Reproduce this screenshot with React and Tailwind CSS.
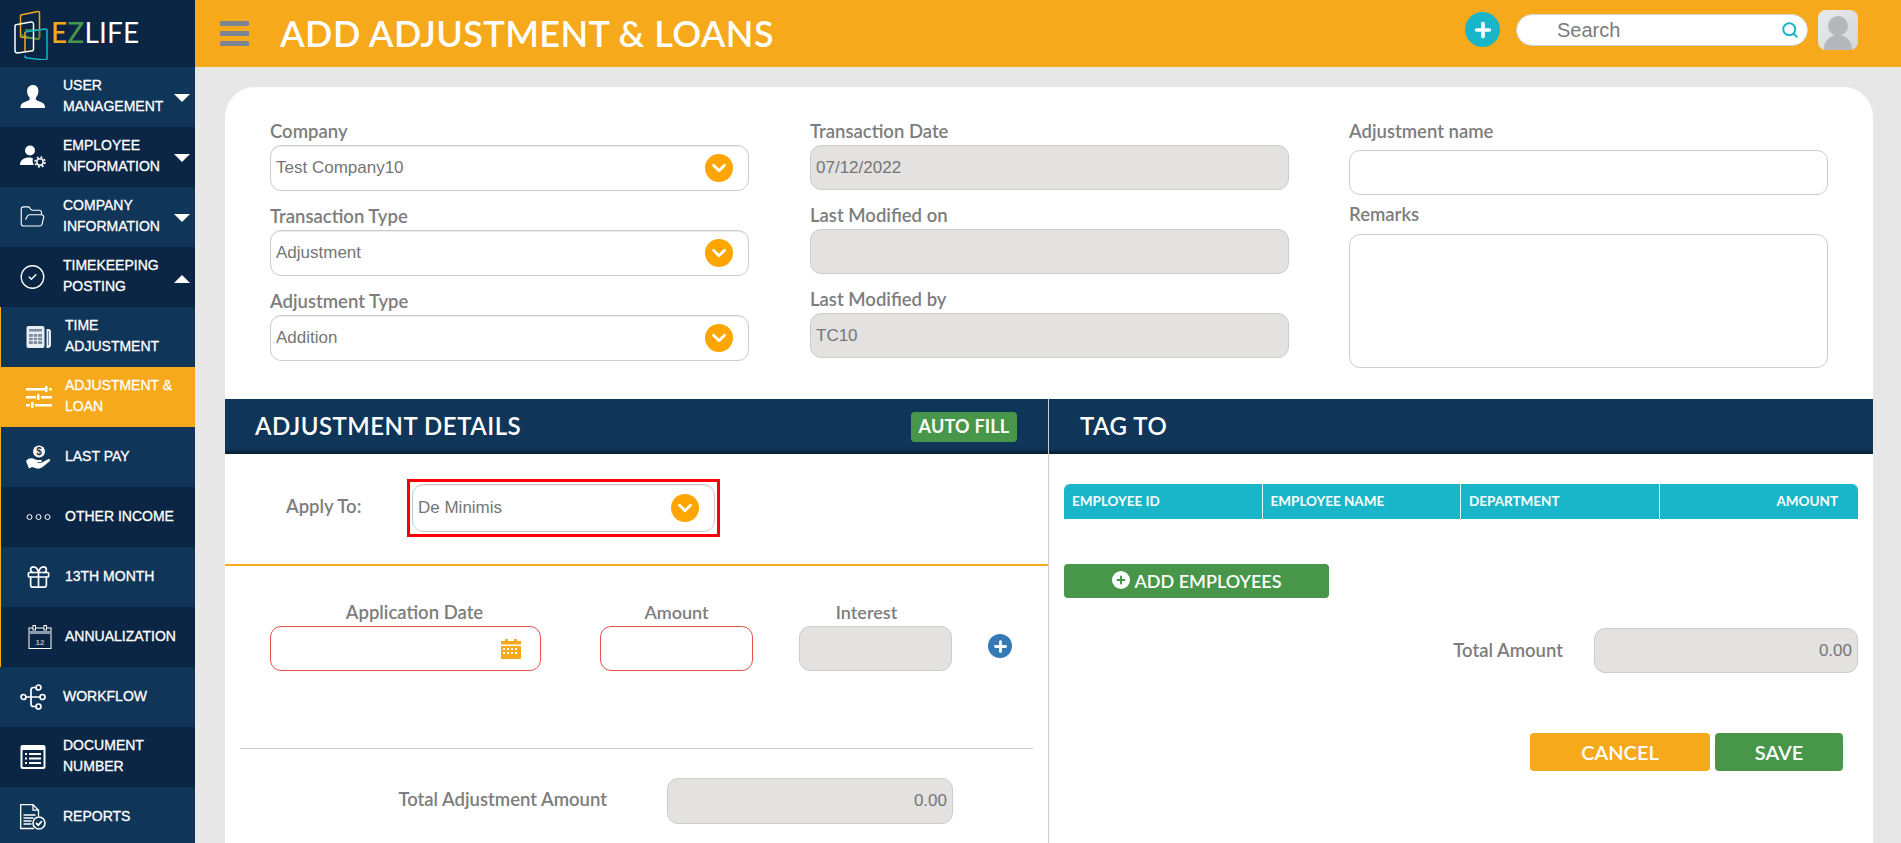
import React from "react";
import { ChevronDown, CircleCheck, FolderOpen, Gift, Plus, Search } from "lucide-react";

const heading = "font-['Lato',sans-serif]";
const arial = "font-['Liberation_Sans',Arial,sans-serif]";

function UserIcon() {
  return (
    <svg width="26" height="24" viewBox="0 0 26 24" fill="#fff">
      <path d="M13 0c3.4 0 5.4 2.6 5.4 6 0 2.6-1 5-2.5 6.400v2.300c1 .9 4.500 1.800 7 3.300 1.600 1 2.100 2.800 2.100 5H.5c0-2.200.5-4 2.100-5 2.500-1.500 6-2.400 7-3.300v-2.300C8.100 11 7.100 8.600 7.100 6 7.100 2.600 9.600 0 13 0z" />
    </svg>
  );
}

function EmployeeIcon() {
  return (
    <svg width="26" height="24" viewBox="0 0 26 24" fill="none">
      <circle cx="10" cy="5.500" r="5" fill="#fff" />
      <path d="M0 20c0-5 4-7.500 9-7.500 1.500 0 3 .2 4 .7-.8 2.500-.3 5 1 6.800z" fill="#fff" />
      <circle cx="20" cy="17" r="3.200" stroke="#fff" strokeWidth="1.500" />
      <circle cx="20" cy="17" r="5" stroke="#fff" strokeWidth="1.500" strokeDasharray="2 1.900" />
    </svg>
  );
}

function NewsIcon() {
  return (
    <svg width="26" height="24" viewBox="0 0 26 24" fill="none">
      <rect x="0.500" y="1" width="18" height="22" rx="2" fill="#e8edf2" />
      <rect x="3" y="4" width="13" height="2.500" fill="#7d8da0" />
      <path d="M3 9h13v10H3z" fill="#7d8da0" />
      <path d="M3 12.300h13M3 15.600h13M7.300 9v10M11.600 9v10" stroke="#e8edf2" />
      <path d="M20.500 4h2c1.500 0 2.500 1 2.500 2.500V20c0 2-1.500 3-3 3h-1.500z" fill="#e8edf2" />
      <path d="M22.500 6v14" stroke="#7d8da0" />
    </svg>
  );
}

function SlidersIcon() {
  return (
    <svg width="26" height="24" viewBox="0 0 26 24" fill="#fff">
      <rect x="0" y="3" width="20" height="2.500" />
      <rect x="19" y="1" width="2.500" height="6" />
      <rect x="23" y="3" width="3" height="2.500" />
      <rect x="0" y="11" width="10" height="2.500" />
      <rect x="11" y="9" width="2.500" height="6" />
      <rect x="15" y="11" width="11" height="2.500" />
      <rect x="0" y="19" width="4" height="2.500" />
      <rect x="5" y="17" width="2.500" height="6" />
      <rect x="9" y="19" width="17" height="2.500" />
    </svg>
  );
}

function HandIcon() {
  return (
    <svg width="26" height="24" viewBox="0 0 26 24">
      <circle cx="13" cy="6.500" r="6" fill="#fff" />
      <text x="13" y="10" textAnchor="middle" fontSize="10" fontWeight="700" fill="#0f3558" fontFamily="Liberation Sans">$</text>
      <path d="M0 16c2-2.500 4.500-3 7-2.500l4 1.500h4c1.200 0 1.200 2-.2 2h-3.300v.8h4l6.500-3.500c1.600-.7 3 .8 1.600 2L16 22.500c-2 1.200-4 1.500-6 .8l-4-1.300-3 1.500z" fill="#fff" />
    </svg>
  );
}

function DotsIcon() {
  return (
    <svg width="26" height="24" viewBox="0 0 26 24" fill="none" stroke="#fff" strokeWidth="1">
      <circle cx="3.500" cy="12" r="2.500" />
      <circle cx="12.500" cy="12" r="2.500" />
      <circle cx="21.500" cy="12" r="2.500" />
    </svg>
  );
}

function CalendarTwelveIcon() {
  return (
    <svg width="26" height="26" viewBox="0 0 26 26" fill="none">
      <rect x="3" y="4" width="22" height="20.500" stroke="#fff" />
      <rect x="3.500" y="7" width="21" height="3" fill="#8e9bab" />
      <rect x="7" y="1.500" width="2.500" height="4.500" fill="#0a2644" stroke="#fff" />
      <rect x="18" y="1.500" width="2.500" height="4.500" fill="#0a2644" stroke="#fff" />
      <text x="14" y="20.500" textAnchor="middle" fontSize="8" fontWeight="700" fill="#aeb8c4" fontFamily="Liberation Sans">12</text>
    </svg>
  );
}

function WorkflowIcon() {
  return (
    <svg width="26" height="26" viewBox="0 0 26 26" fill="none" stroke="#fff" strokeWidth="1.700">
      <circle cx="3.500" cy="13" r="2.500" />
      <circle cx="18.500" cy="3.500" r="2.500" />
      <circle cx="22.500" cy="13" r="2.500" />
      <circle cx="18.500" cy="22.500" r="2.500" />
      <path d="M6 13h14M16 3.500h-2.500c-1.500 0-2.500 1-2.500 2.500v14c0 1.500 1 2.500 2.500 2.500H16" />
    </svg>
  );
}

function ListIcon() {
  return (
    <svg width="26" height="26" viewBox="0 0 26 26">
      <rect x="0.500" y="1" width="25" height="24" rx="2" fill="#fff" />
      <rect x="2.500" y="6" width="21" height="17" fill="#0a2644" />
      <g fill="#fff">
        <rect x="5" y="9" width="2" height="2" />
        <rect x="9" y="9" width="12" height="2" />
        <rect x="5" y="13.500" width="2" height="2" />
        <rect x="9" y="13.500" width="12" height="2" />
        <rect x="5" y="18" width="2" height="2" />
        <rect x="9" y="18" width="12" height="2" />
      </g>
    </svg>
  );
}

function ReportIcon() {
  return (
    <svg width="26" height="26" viewBox="0 0 26 26" fill="none" stroke="#fff" strokeWidth="1.300">
      <path d="M14 24.500H.7V.7H13l5.500 5.500v6" />
      <path d="M13 .7v5.500h5.500M3.500 11h12M3.500 14h10M3.500 17h8M3.500 20h8" />
      <circle cx="19" cy="19" r="6" fill="#0f3558" strokeWidth="1.600" />
      <path d="M16 19l2.200 2.200 3.800-4" strokeWidth="1.800" />
    </svg>
  );
}

const menu = [
  { label: ["USER", "MANAGEMENT"], icon: <UserIcon />, caret: "down", tone: "light" },
  { label: ["EMPLOYEE", "INFORMATION"], icon: <EmployeeIcon />, caret: "down", tone: "dark" },
  { label: ["COMPANY", "INFORMATION"], icon: <FolderOpen size={30} strokeWidth={1} color="#fff" />, caret: "down", tone: "light" },
  { label: ["TIMEKEEPING", "POSTING"], icon: <CircleCheck size={30} strokeWidth={1.200} color="#fff" />, caret: "up", tone: "dark" },
  { label: ["TIME", "ADJUSTMENT"], icon: <NewsIcon />, sub: true, tone: "light" },
  { label: ["ADJUSTMENT &", "LOAN"], icon: <SlidersIcon />, sub: true, tone: "active" },
  { label: ["LAST PAY"], icon: <HandIcon />, sub: true, tone: "light" },
  { label: ["OTHER INCOME"], icon: <DotsIcon />, sub: true, tone: "dark" },
  { label: ["13TH MONTH"], icon: <Gift size={30} strokeWidth={1.500} color="#fff" />, sub: true, tone: "light" },
  { label: ["ANNUALIZATION"], icon: <CalendarTwelveIcon />, sub: true, tone: "dark" },
  { label: ["WORKFLOW"], icon: <WorkflowIcon />, tone: "light" },
  { label: ["DOCUMENT", "NUMBER"], icon: <ListIcon />, tone: "dark" },
  { label: ["REPORTS"], icon: <ReportIcon />, tone: "light" },
];

const toneClass = {
  light: "bg-[#0f3558]",
  dark: "bg-[#0a2644]",
  active: "bg-[#f6a91b]",
};

function MenuItem({ item }) {
  return (
    <div
      className={`flex h-[60px] shrink-0 items-center relative ${toneClass[item.tone]} ${
        item.sub ? "border-l border-[#f6a91b] pl-[24px]" : "pl-[19px]"
      }`}
    >
      <div className="flex w-[27px] shrink-0 items-center justify-center">{item.icon}</div>
      <div className={`${arial} pb-[2px] text-white text-[14px] leading-[21px] [-webkit-text-stroke:0.3px_#fff] ${item.sub ? "ml-[13px]" : "ml-[17px]"}`}>
        {item.label.map((line) => (
          <div key={line}>{line}</div>
        ))}
      </div>
      {item.caret === "down" && (
        <div className="absolute left-[174px] top-[27px] h-0 w-0 border-x-[8px] border-t-[8px] border-x-transparent border-t-white" />
      )}
      {item.caret === "up" && (
        <div className="absolute left-[174px] top-[28px] h-0 w-0 border-x-[8px] border-b-[8px] border-x-transparent border-b-white" />
      )}
    </div>
  );
}

function Sidebar() {
  return (
    <div className="flex h-[843px] w-[195px] shrink-0 flex-col overflow-hidden bg-[#0a2644]">
      <div className="flex h-[67px] shrink-0 items-center pl-[14px]">
        <svg width="36" height="52" viewBox="0 0 36 52" fill="none" className="shrink-0">
          <path d="M6.500 7 24 3.500c.8-.1 1.500.4 1.500 1.300V30" stroke="#f6a91b" strokeWidth="1.500" />
          <path d="M6.500 7v22M6.500 29l19 2" stroke="#f6a91b" strokeWidth="1.500" />
          <path d="M7 25c0 2 1 3 3 3l12 3c2 0 3.500-1 3.500-3V22" stroke="#47964a" strokeWidth="1.500" />
          <path d="M11 22h14.500" stroke="#47964a" strokeWidth="1.500" />
          <path d="M3 16.500 17 14c1.500-.2 2.500.8 2.500 2V41c0 1.500-1 2.300-2.500 2L3.500 45c-1.500 0-2.500-1-2.500-2.500V18.500c0-1 .8-2 2-2z" stroke="#fff" strokeWidth="1.500" />
          <path d="M11 24 31 21c1.500-.2 2 .8 2 2V50c0 1.500-1 2-2.500 2L13 50c-1.500 0-2-1-2-2.500" stroke="#19b5c9" strokeWidth="1.500" />
          <path d="M11 24v19" stroke="#f6a91b" strokeWidth="1.500" />
        </svg>
        <div className={`${heading} ml-[1px] text-[28px] leading-none tracking-[0.2px] -translate-y-[2px]`}>
          <span className="font-medium text-[#f6a91b]">E</span>
          <span className="font-medium text-[#47964a]">Z</span>
          <span className="font-normal text-white">LIFE</span>
        </div>
      </div>
      {menu.map((item) => (
        <MenuItem key={item.label[0]} item={item} />
      ))}
    </div>
  );
}

function Header() {
  return (
    <div className="flex h-[67px] shrink-0 items-center bg-[#f6a91b]">
      <div className="ml-[25px] flex w-[29px] flex-col gap-[5px]">
        <div className="h-[5px] rounded-[1px] bg-[#7b8591]" />
        <div className="h-[5px] rounded-[1px] bg-[#7b8591]" />
        <div className="h-[5px] rounded-[1px] bg-[#7b8591]" />
      </div>
      <h1 className={`${heading} ml-[31px] mb-[1px] text-[36px] font-semibold leading-none tracking-[0.4px] text-white`}>
        ADD ADJUSTMENT &amp; LOANS
      </h1>
      <div className="mb-[8px] ml-auto flex items-center">
        <div className="flex h-[35px] w-[35px] items-center justify-center rounded-full bg-[#19b5c9]">
          <Plus size={22} strokeWidth={4} color="#fff" />
        </div>
        <div className="ml-[16px] flex h-[32px] w-[292px] items-center rounded-full border border-[#cfd3d6] bg-white pl-[40px] pr-[8px]">
          <span className={`${arial} text-[20px] text-[#7b7b7b]`}>Search</span>
          <Search size={18} strokeWidth={2.600} color="#19b5c9" className="ml-auto" />
        </div>
        <div className="relative ml-[10px] mr-[43px] h-[40px] w-[40px] overflow-hidden rounded-[8px] bg-gradient-to-br from-[#e9eaec] to-[#d4d6da]">
          <div className="absolute left-[10px] top-[6px] h-[20px] w-[20px] rounded-full bg-[#b5b7bc]" />
          <div className="absolute left-[6px] top-[25px] h-[28px] w-[28px] rounded-full bg-[#b5b7bc]" />
        </div>
      </div>
    </div>
  );
}

function Label({ children, className = "" }) {
  return (
    <div className={`${heading} flex h-[25px] items-center pb-[2px] text-[18.500px] font-semibold text-[#7d7d7d] ${className}`}>
      {children}
    </div>
  );
}

function Chevron() {
  return (
    <div className="flex h-[28px] w-[28px] shrink-0 items-center justify-center rounded-full bg-[#ffa500]">
      <ChevronDown size={22} strokeWidth={3} color="#fff" />
    </div>
  );
}

function SelectBox({ value, className = "" }) {
  return (
    <div className={`flex h-[46px] items-center justify-between rounded-[11px] border border-[#cccccc] bg-white pl-[5px] pr-[15px] shadow-[inset_0_1px_1px_rgba(0,0,0,0.08)] ${className}`}>
      <span className={`${arial} text-[17px] text-[#757575]`}>{value}</span>
      <Chevron />
    </div>
  );
}

function InputBox({ value, className = "", disabled, right, error }) {
  return (
    <div
      className={`flex h-[45px] items-center rounded-[11px] border ${
        error ? "border-[#e9514f] bg-white" : "border-[#cccccc]"
      } ${disabled ? "bg-[#e4e1e1]" : ""} ${right ? "justify-end pr-[5px]" : "pl-[5px]"} ${className}`}
    >
      <span className={`${arial} text-[17px] text-[#757575]`}>{value}</span>
    </div>
  );
}

function SectionHeader({ title, children }) {
  return (
    <div className="flex h-[55px] items-center justify-between bg-[#0f3558] bg-[linear-gradient(to_bottom,#0f3558_90%,#071a2c_100%)] pb-[2px]">
      <h2 className={`${heading} text-[24px] font-semibold tracking-[0.5px] text-white`}>{title}</h2>
      {children}
    </div>
  );
}

function TopForm() {
  return (
    <div className="flex h-[312px] pl-[45px] pt-[33px]">
      <div className="w-[479px]">
        <Label>Company</Label>
        <SelectBox value="Test Company10" />
        <Label className="mt-[14px]">Transaction Type</Label>
        <SelectBox value="Adjustment" />
        <Label className="mt-[14px]">Adjustment Type</Label>
        <SelectBox value="Addition" />
      </div>
      <div className="ml-[61px] w-[479px]">
        <Label>Transaction Date</Label>
        <InputBox value="07/12/2022" disabled />
        <Label className="mt-[14px]">Last Modified on</Label>
        <InputBox disabled />
        <Label className="mt-[14px]">Last Modified by</Label>
        <InputBox value="TC10" disabled />
      </div>
      <div className="ml-[60px] w-[479px]">
        <Label>Adjustment name</Label>
        <InputBox className="mt-[5px]" />
        <Label className="mt-[8px]">Remarks</Label>
        <div className="mt-[6px] h-[134px] rounded-[11px] border border-[#cccccc]" />
      </div>
    </div>
  );
}

function CalendarIcon() {
  return (
    <svg width="20" height="20" viewBox="0 0 20 20" fill="#f6a91b">
      <rect x="4" y="0" width="3" height="3" />
      <rect x="13" y="0" width="3" height="3" />
      <rect x="0" y="2" width="20" height="3.500" />
      <path d="M0 7h20v13H0zM2 9v2h2V9zm4 0v2h2V9zm4 0v2h2V9zm4 0v2h2V9zM2 13v2h2v-2zm4 0v2h2v-2zm4 0v2h2v-2zm4 0v2h2v-2z" fillRule="evenodd" />
    </svg>
  );
}

function AdjustmentDetails() {
  return (
    <div className="h-[444px] w-[824px] shrink-0 border-r border-[#cccccc]">
      <SectionHeader title={<span className="ml-[30px]">ADJUSTMENT DETAILS</span>}>
        <button className={`${heading} mr-[31px] mt-[2px] h-[30px] w-[106px] rounded-[4px] bg-[#47964a] text-[18px] font-bold tracking-[0.2px] text-white`}>
          AUTO FILL
        </button>
      </SectionHeader>
      <div className="flex h-[112px] items-start border-b-2 border-[#f6a91b] pl-[61px] pt-[25px]">
        <Label className="mt-[16px] w-[121px]">Apply To:</Label>
        <div className="h-[58px] w-[313px] border-[3px] border-[#ff0000] p-[2px]">
          <SelectBox value="De Minimis" className="!h-[48px]" />
        </div>
      </div>
      <div className="flex pl-[45px] pt-[35px]">
        <div className="w-[271px]">
          <Label className="justify-center pl-[18px]">Application Date</Label>
          <div className="flex h-[45px] items-center justify-end rounded-[11px] border border-[#e9514f] pr-[19px]">
            <CalendarIcon />
          </div>
        </div>
        <div className="ml-[59px] w-[153px]">
          <Label className="justify-center !text-[18px]">Amount</Label>
          <InputBox error />
        </div>
        <div className="ml-[46px] w-[153px]">
          <Label className="justify-center pr-[18px] !text-[18px]">Interest</Label>
          <InputBox disabled />
        </div>
        <div className="ml-[36px] mt-[33px] flex h-[24px] w-[24px] items-center justify-center rounded-full bg-[#337ab7]">
          <Plus size={17} strokeWidth={4} color="#fff" />
        </div>
      </div>
      <div className="mx-[15px] mt-[77px] border-t border-[#cccccc]" />
      <div className="mt-[29px] flex items-center justify-end gap-[60px] pr-[95px]">
        <Label>Total Adjustment Amount</Label>
        <InputBox value="0.00" disabled right className="!h-[46px] w-[286px]" />
      </div>
    </div>
  );
}

function TagTo() {
  return (
    <div className="min-w-0 flex-1">
      <SectionHeader title={<span className="ml-[31px]">TAG TO</span>} />
      <div className="pl-[15px] pr-[15px] pt-[30px]">
        <div className={`${heading} grid h-[35px] grid-cols-4 overflow-hidden rounded-t-[6px] bg-[#19b5c9] text-[13.500px] font-bold text-white`}>
          <div className="flex items-center border-r border-[#e8f6f8] pl-[8px]">EMPLOYEE ID</div>
          <div className="flex items-center border-r border-[#e8f6f8] pl-[8px]">EMPLOYEE NAME</div>
          <div className="flex items-center border-r border-[#e8f6f8] pl-[8px]">DEPARTMENT</div>
          <div className="flex items-center justify-end pr-[20px]">AMOUNT</div>
        </div>
        <button className={`${heading} mt-[45px] flex h-[34px] w-[265px] items-center justify-center gap-[5px] rounded-[4px] bg-[#47964a] text-[18px] font-semibold text-white`}>
          <span className="mb-[3px] flex h-[18px] w-[18px] items-center justify-center rounded-full bg-white">
            <Plus size={12} strokeWidth={4} color="#47964a" />
          </span>
          ADD EMPLOYEES
        </button>
        <div className="mt-[30px] flex items-center justify-end gap-[31px]">
          <Label className="mt-[3px]">Total Amount</Label>
          <InputBox value="0.00" disabled right className="w-[264px]" />
        </div>
        <div className="mt-[60px] flex justify-end gap-[5px] pr-[15px]">
          <button className={`${heading} h-[38px] w-[180px] rounded-[4px] bg-[#f6a91b] text-[20px] font-semibold text-white`}>CANCEL</button>
          <button className={`${heading} h-[38px] w-[128px] rounded-[4px] bg-[#47964a] text-[20px] font-semibold text-white`}>SAVE</button>
        </div>
      </div>
    </div>
  );
}

export default function App() {
  return (
    <div className="flex h-[843px] w-[1901px] overflow-hidden bg-[#e7e7e7]">
      <Sidebar />
      <div className="flex min-w-0 flex-1 flex-col">
        <Header />
        <div className="ml-[30px] mr-[28px] mt-[20px] flex-1 rounded-t-[30px] bg-white">
          <TopForm />
          <div className="flex">
            <AdjustmentDetails />
            <TagTo />
          </div>
        </div>
      </div>
    </div>
  );
}
